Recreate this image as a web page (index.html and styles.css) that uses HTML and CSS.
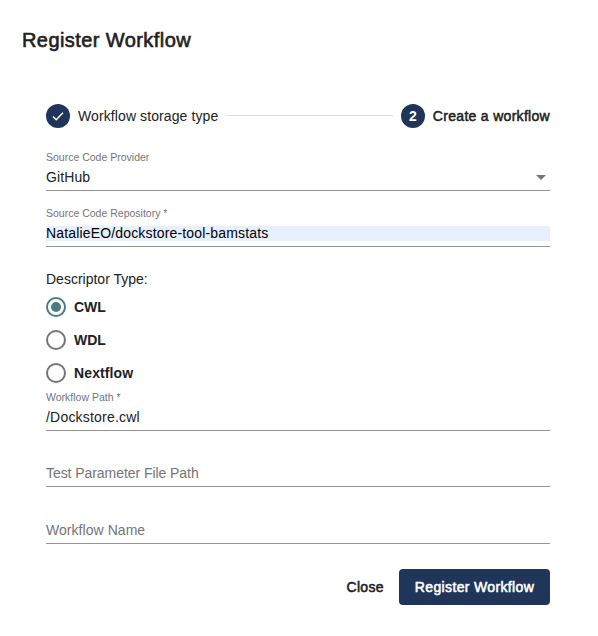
FILE: index.html
```html
<!DOCTYPE html>
<html lang="en">
<head>
<meta charset="utf-8">
<title>Register Workflow</title>
<link rel="stylesheet" href="styles.css">
</head>
<body>
<main class="dialog">
  <h1 class="title">Register Workflow</h1>
  <div class="content">
    <div class="stepper">
      <span class="step-icon"><svg width="16" height="16" viewBox="0 0 16 16"><path d="M3 8.6 6.2 11.7 13 4.7" fill="none" stroke="#fff" stroke-width="1.4"/></svg></span>
      <span class="step-label">Workflow storage type</span>
      <span class="step-line"></span>
      <span class="step-icon">2</span>
      <span class="step-label active">Create a workflow</span>
    </div>
    <div class="field provider">
      <div class="label">Source Code Provider</div>
      <div class="value select"><span>GitHub</span><svg width="10" height="5" viewBox="0 0 10 5"><path d="M0 0H10L5 5Z" fill="#757575"/></svg></div>
    </div>
    <div class="field repository">
      <div class="label">Source Code Repository *</div>
      <div class="value autofill">NatalieEO/dockstore-tool-bamstats</div>
    </div>
    <div class="group-label">Descriptor Type:</div>
    <div class="radios">
      <div class="radio checked"><span class="circle"></span><span>CWL</span></div>
      <div class="radio"><span class="circle"></span><span>WDL</span></div>
      <div class="radio"><span class="circle"></span><span class="nextflow">Nextflow</span></div>
    </div>
    <div class="field path">
      <div class="label">Workflow Path *</div>
      <div class="value cwl">/Dockstore.cwl</div>
    </div>
    <div class="field empty"><div class="value placeholder parameter">Test Parameter File Path</div></div>
    <div class="field empty name"><div class="value placeholder">Workflow Name</div></div>
    <div class="actions">
      <button class="close">Close</button>
      <button class="submit">Register Workflow</button>
    </div>
  </div>
</main>
</body>
</html>
```
FILE: styles.css
```css
* { box-sizing: border-box; }
body {
  margin: 0;
  background: #fff;
  color: #212121;
  font: 14px/16px "Liberation Sans", Arial, sans-serif;
}
.dialog { height: 636px; padding: 24px 48px 0 46px; overflow: hidden; }
.title {
  margin: 0 0 0 -24px;
  font-size: 20px;
  font-weight: 400;
  line-height: 32px;
  letter-spacing: 0.42px;
  -webkit-text-stroke: 0.6px currentColor;
}
.content { padding-top: 48px; }
.stepper { display: flex; align-items: center; height: 24px; }
.step-icon {
  display: flex;
  align-items: center;
  justify-content: center;
  width: 24px;
  height: 24px;
  border-radius: 50%;
  background: #20355a;
  color: #fff;
  font-weight: 700;
}
.step-label { margin-left: 8px; letter-spacing: 0.1px; white-space: nowrap; }
.step-label.active { letter-spacing: 0.3px; -webkit-text-stroke: 0.5px currentColor; }
.step-line { flex: 1; height: 1px; margin: 0 8px; background: #dedede; position: relative; top: -0.5px; }
.field { border-bottom: 1px solid #949494; }
.label { height: 12px; color: #757575; font-size: 10.5px; line-height: 12px; }
.value { height: 16px; margin-top: 6px; }
.provider { height: 40px; margin-top: 23px; }
.select { display: flex; align-items: center; justify-content: space-between; padding-right: 4px; letter-spacing: 0.1px; }
.repository { height: 40px; margin-top: 16px; }
.autofill { background: #e8f0fe; color: #000; letter-spacing: 0.16px; line-height: 15px; height: 15px; margin-top: 7px; }
.group-label { margin-top: 24px; }
.radios { margin-top: 10px; }
.radio { display: flex; align-items: center; gap: 8px; height: 20px; margin-bottom: 13px; font-weight: 700; }
.nextflow { letter-spacing: 0.12px; }
.circle {
  display: flex;
  align-items: center;
  justify-content: center;
  width: 20px;
  height: 20px;
  border: 2px solid #757575;
  border-radius: 50%;
}
.checked .circle { border-color: #4a7b80; }
.checked .circle::after { content: ""; width: 10px; height: 10px; border-radius: 50%; background: #4a7b80; }
.path { height: 40px; margin-top: -5px; }
.cwl { letter-spacing: 0.2px; }
.empty { height: 56px; padding-top: 28px; }
.name { height: 57px; padding-top: 29px; }
.placeholder { color: #757575; letter-spacing: 0.05px; }
.parameter { letter-spacing: -0.06px; }
.actions { display: flex; justify-content: flex-end; margin-top: 25px; gap: 15px; }
button {
  height: 36px;
  padding: 0;
  border: 0;
  background: none;
  color: #212121;
  font: inherit;
  letter-spacing: 0.35px;
  -webkit-text-stroke: 0.55px currentColor;
}
.submit { width: 151px; border-radius: 4px; background: #20355a; color: #fff; }
```
